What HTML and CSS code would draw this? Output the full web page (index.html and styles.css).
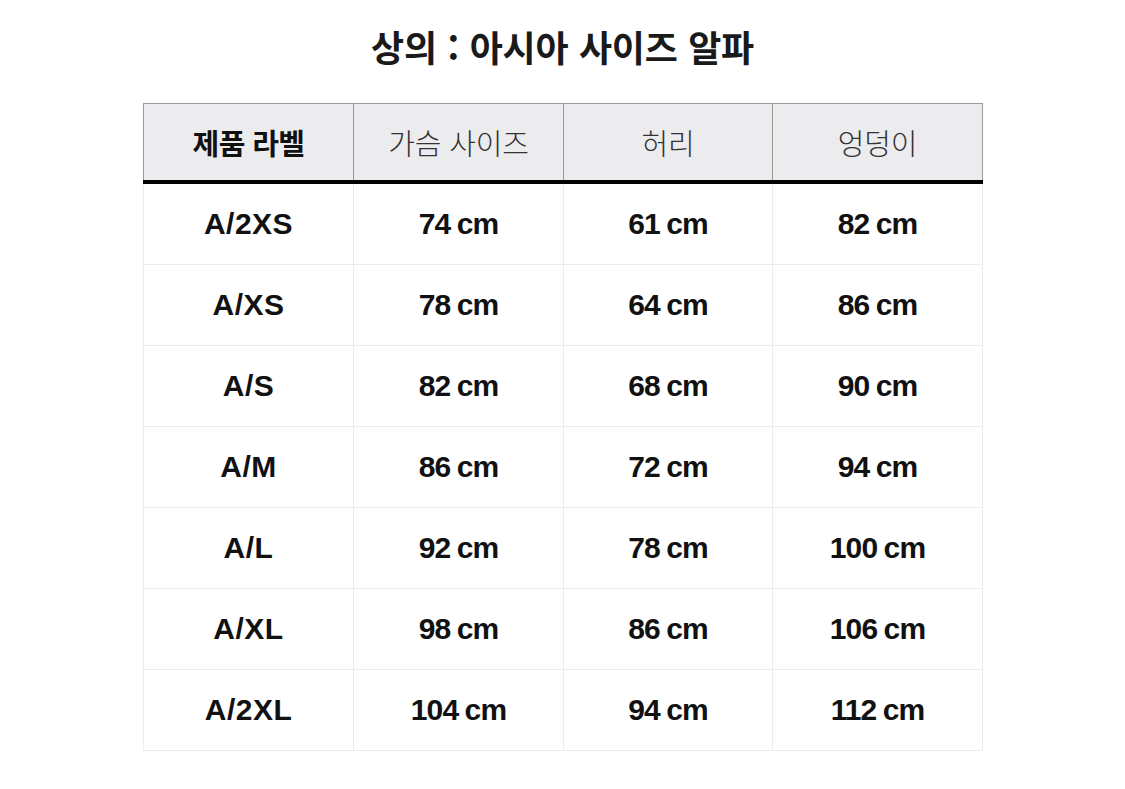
FILE: index.html
```html
<!DOCTYPE html>
<html lang="ko">
<head>
<meta charset="utf-8">
<link rel="stylesheet" href="styles.css">
</head>
<body>
<div class="page">
  <h1 class="title">상의 : 아시아 사이즈 알파</h1>
  <table class="size-table">
    <colgroup>
      <col class="c1"><col class="c2"><col class="c3"><col class="c4">
    </colgroup>
    <thead>
      <tr>
        <th class="first">제품 라벨</th>
        <th>가슴 사이즈</th>
        <th>허리</th>
        <th>엉덩이</th>
      </tr>
    </thead>
    <tbody>
      <tr><td class="label">A/2XS</td><td>74 cm</td><td>61 cm</td><td>82 cm</td></tr>
      <tr><td class="label">A/XS</td><td>78 cm</td><td>64 cm</td><td>86 cm</td></tr>
      <tr><td class="label">A/S</td><td>82 cm</td><td>68 cm</td><td>90 cm</td></tr>
      <tr><td class="label">A/M</td><td>86 cm</td><td>72 cm</td><td>94 cm</td></tr>
      <tr><td class="label">A/L</td><td>92 cm</td><td>78 cm</td><td>100 cm</td></tr>
      <tr><td class="label">A/XL</td><td>98 cm</td><td>86 cm</td><td>106 cm</td></tr>
      <tr><td class="label">A/2XL</td><td>104 cm</td><td>94 cm</td><td>112 cm</td></tr>
    </tbody>
  </table>
</div>
</body>
</html>
```

FILE: styles.css
```css
html, body {
  margin: 0;
  padding: 0;
  background: #ffffff;
}

.page {
  width: 1125px;
  padding-top: 22px;
  display: flex;
  flex-direction: column;
  align-items: center;
  font-family: "Noto Sans CJK KR", "Liberation Sans", sans-serif;
  color: #111;
}

.title {
  margin: 0 0 33px 0;
  height: 48px;
  line-height: 48px;
  font-size: 36px;
  font-weight: 700;
  letter-spacing: -0.3px;
  word-spacing: 1px;
  color: #1a1a1a;
}

.size-table {
  border-collapse: collapse;
  table-layout: fixed;
  width: 839px;
  margin-left: 1px;
}

.c1 { width: 210px; }
.c2 { width: 210px; }
.c3 { width: 209px; }
.c4 { width: 210px; }

.size-table th {
  height: 76px;
  padding: 0;
  background: #ececef;
  border: 1px solid #9a9a9a;
  border-bottom: 4px solid #000;
  font-size: 29px;
  font-weight: 300;
  letter-spacing: -0.2px;
  color: #333;
  text-align: center;
  vertical-align: middle;
}

.size-table th.first {
  font-weight: 700;
  color: #111;
  letter-spacing: -0.6px;
}

.size-table td {
  height: 80px;
  padding: 0;
  border: 1px solid #ececec;
  font-family: "Liberation Sans", "Noto Sans CJK KR", sans-serif;
  font-size: 30px;
  font-weight: 700;
  letter-spacing: -0.9px;
  word-spacing: -1px;
  color: #111;
  text-align: center;
  vertical-align: middle;
}

.size-table td.label {
  letter-spacing: 0.5px;
  word-spacing: 0;
}
```
